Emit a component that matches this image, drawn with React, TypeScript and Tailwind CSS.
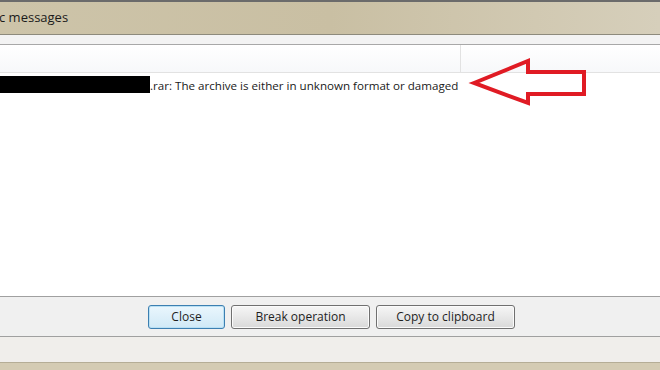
import React from "react";

function Btn({ label, w, def }: { label: string; w: string; def?: boolean }) {
  return (
    <div
      className={`${w} h-[24px] flex items-center justify-center rounded-[3px] border text-[12px] text-[#1e1e1e] ${
        def
          ? "border-[#3c7fb1] bg-gradient-to-b from-[#eaf6fd] to-[#d0e9f6] shadow-[inset_0_0_0_1px_#b9e0f4]"
          : "border-[#707070] bg-gradient-to-b from-[#f6f6f6] via-[#e8e8e8] to-[#d9d9d9] shadow-[inset_0_0_0_1px_#fbfbfb]"
      }`}
    >
      {label}
    </div>
  );
}

export default function App() {
  return (
    <div
      className="relative w-[660px] h-[370px] overflow-hidden flex flex-col bg-white"
      style={{ fontFamily: '"Open Sans", "Noto Sans", sans-serif' }}
    >
      <div className="h-[2px] bg-[#6b6b6b]" />
      <div className="h-[33px] flex items-center bg-gradient-to-r from-[#cdc4a9] via-[#c9bfa3] to-[#d6cfbb] border-b border-[#8d8a7c] text-[13px] text-[#1a1a1a] pl-0">
        <span className="-ml-[1px]">c messages</span>
      </div>
      <div className="h-[10px] bg-[#f3f3f3] border-b border-[#a8a8a8]" />
      <div className="h-[28px] flex bg-gradient-to-b from-white to-[#f7f8fa] border-b border-[#e2e2e2]">
        <div className="w-[461px] border-r border-[#e2e2e2]" />
        <div className="flex-1" />
      </div>
      <div className="flex-1 bg-white">
        <div className="flex items-center h-[18px] mt-[2px]">
          <div className="w-[150px] h-[17px] bg-black" />
          <span className="text-[11.6px] text-[#1a1a1a] leading-none whitespace-nowrap mt-[3px]">
            .rar: The archive is either in unknown format or damaged
          </span>
        </div>
      </div>
      <div className="h-[41px] bg-[#f0f0f0] border-t border-b border-[#a0a0a0] flex items-start pt-[8px] pl-[148px] gap-[6px]">
        <Btn label="Close" w="w-[77px]" def />
        <Btn label="Break operation" w="w-[139px]" />
        <Btn label="Copy to clipboard" w="w-[139px]" />
      </div>
      <div className="h-[25px] bg-[#f0eeeb]" />
      <div className="h-[8px] bg-[#d4cbb3] border-t border-[#b5ad96]" />
      <svg
        className="absolute left-0 top-0"
        width="660"
        height="370"
        viewBox="0 0 660 370"
      >
        <path
          d="M474 83 L528 61 L528 72 L584 72 L584 94 L528 94 L528 103 Z"
          fill="none"
          stroke="#e01b24"
          strokeWidth="4"
          strokeLinejoin="miter"
        />
      </svg>
    </div>
  );
}
